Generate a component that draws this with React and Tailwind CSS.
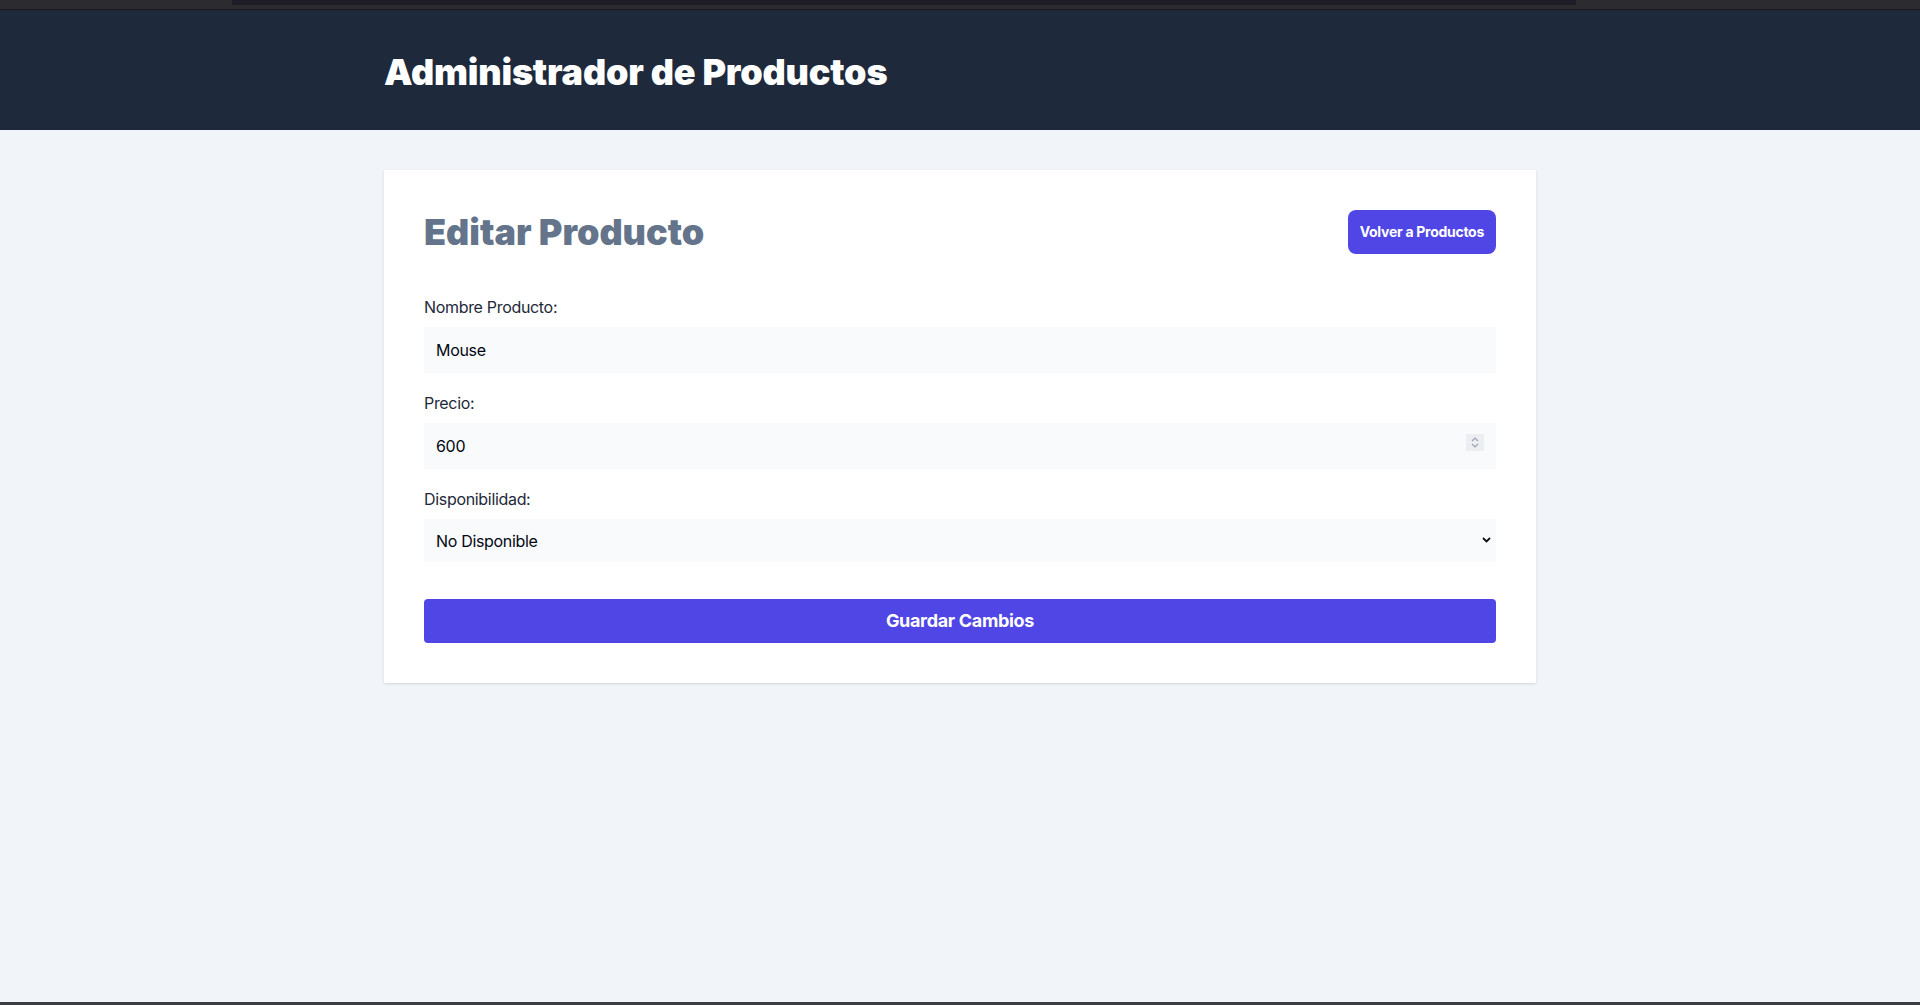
import React from "react";

export default function App() {
  return (
    <div className="min-h-screen flex flex-col bg-[#f1f5f9]" style={{ fontFamily: "Inter, 'Noto Sans', sans-serif" }}>
      {/* top browser strip */}
      <div className="h-[10px] bg-[#2c2b30] border-b border-[#19181c]">
        <div className="ml-[232px] w-[1344px] h-[5px] bg-[#1e1c26]" />
      </div>

      <header className="bg-[#1e293b] pt-[42px] pb-[38px]">
        <div className="max-w-6xl mx-auto">
          <h1 className="text-4xl font-black text-white tracking-[-0.005em]">Administrador de Productos</h1>
        </div>
      </header>

      <main className="flex-1">
        <div className="max-w-6xl mx-auto mt-10 bg-white shadow p-10">
          <div className="flex justify-between items-center">
            <h2 className="text-4xl font-black text-[#64748b]">Editar Producto</h2>
            <button className="rounded-lg bg-[#4f46e5] p-3 text-sm font-bold text-white tracking-[-0.02em]">
              Volver a Productos
            </button>
          </div>

          <form className="mt-[41px] tracking-[-0.02em]">
            <div className="mb-[18px]">
              <label className="block text-base leading-6 text-gray-800">Nombre Producto:</label>
              <input
                type="text"
                defaultValue="Mouse"
                className="mt-2 block w-full h-[46px] px-3 bg-[#f8fafc] text-base text-gray-950 outline-none"
              />
            </div>

            <div className="mb-[18px]">
              <label className="block text-base leading-6 text-gray-800">Precio:</label>
              <div className="relative mt-2">
                <input
                  type="text"
                  defaultValue="600"
                  className="block w-full h-[46px] px-3 bg-[#f8fafc] text-base text-gray-950 outline-none"
                />
                <div className="absolute right-3 top-[11px] w-[18px] h-[17px] bg-[#eceef1] flex flex-col items-center justify-center gap-[1px]">
                  <svg width="8" height="5" viewBox="0 0 8 5" fill="none">
                    <path d="M1 4L4 1L7 4" stroke="#9ca3af" strokeWidth="1.2" />
                  </svg>
                  <svg width="8" height="5" viewBox="0 0 8 5" fill="none">
                    <path d="M1 1L4 4L7 1" stroke="#9ca3af" strokeWidth="1.2" />
                  </svg>
                </div>
              </div>
            </div>

            <div>
              <label className="block text-base leading-6 text-gray-800">Disponibilidad:</label>
              <div className="relative mt-2">
                <select
                  defaultValue="false"
                  className="block w-full h-[43px] px-3 bg-[#f8fafc] text-base text-gray-950 appearance-none outline-none"
                >
                  <option value="true">Disponible</option>
                  <option value="false">No Disponible</option>
                </select>
                <svg
                  className="absolute right-[5px] top-[18px] pointer-events-none"
                  width="9"
                  height="6"
                  viewBox="0 0 9 6"
                  fill="none"
                >
                  <path d="M1 1L4.5 4.5L8 1" stroke="#111" strokeWidth="1.8" />
                </svg>
              </div>
            </div>

            <button
              type="submit"
              className="mt-[37px] w-full h-[44px] rounded bg-[#4f46e5] text-lg font-bold text-white"
            >
              Guardar Cambios
            </button>
          </form>
        </div>
      </main>

      <div className="h-[3px] bg-[#3a3d42]" />
    </div>
  );
}
